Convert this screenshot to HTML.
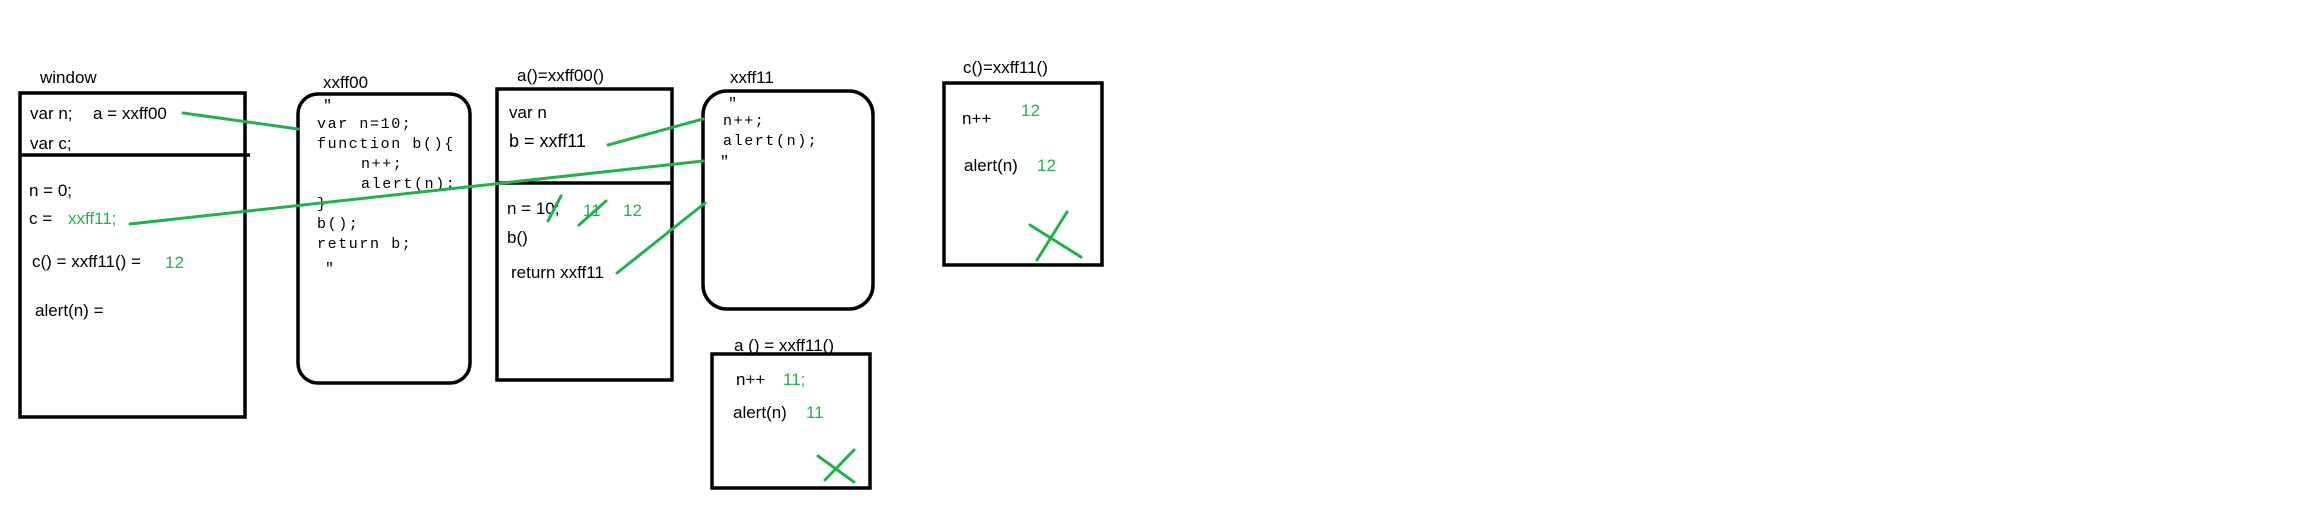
<!DOCTYPE html>
<html><head><meta charset="utf-8"><style>
html,body{margin:0;padding:0;background:#fff;}
svg{display:block;}
text{font-family:"Liberation Sans","Noto Sans CJK SC",sans-serif;font-size:17px;fill:#000;}
.m{font-family:"Liberation Mono",monospace;font-size:15px;letter-spacing:1.6px;}
.g{fill:#22b14c;}
</style></head><body>
<svg width="2318" height="528" viewBox="0 0 2318 528" xmlns="http://www.w3.org/2000/svg">
<g fill="none" stroke="#000" stroke-width="3.5">
<rect x="20" y="93" width="225" height="324"/>
<line x1="20" y1="155" x2="250" y2="155"/>
<rect x="298" y="94" width="172" height="289" rx="20"/>
<rect x="497" y="89" width="175" height="291"/>
<line x1="497" y1="183" x2="673" y2="183"/>
<rect x="703" y="91" width="170" height="218" rx="24"/>
<rect x="712" y="354" width="158" height="134"/>
<rect x="944" y="83" width="158" height="182"/>
</g>
<text x="40" y="83">window</text>
<text x="30" y="119">var n;</text>
<text x="93" y="119">a = xxff00</text>
<text x="30" y="149">var c;</text>
<text x="29" y="196">n = 0;</text>
<text x="29" y="224">c =</text>
<text x="68" y="224" class="g">xxff11;</text>
<text x="32" y="267">c() = xxff11() =</text>
<text x="165" y="268" class="g">12</text>
<text x="35" y="316">alert(n) =</text>

<text x="323" y="88">xxff00</text>
<text x="323" y="110" class="m">"</text>
<text x="317" y="128" class="m">var n=10;</text>
<text x="317" y="148" class="m">function b(){</text>
<text x="361" y="168" class="m">n++;</text>
<text x="361" y="188" class="m">alert(n);</text>
<text x="317" y="208" class="m">}</text>
<text x="317" y="228" class="m">b();</text>
<text x="317" y="248" class="m">return b;</text>
<text x="325" y="273" class="m">"</text>

<text x="517" y="81">a()=xxff00()</text>
<text x="509" y="118">var n</text>
<text x="509" y="147" style="font-size:18px">b = xxff11</text>
<text x="507" y="214">n = 10;</text>
<text x="583" y="216" class="g">11</text>
<text x="623" y="216" class="g">12</text>
<text x="507" y="243">b()</text>
<text x="511" y="278">return xxff11</text>

<text x="730" y="83">xxff11</text>
<text x="728" y="108" class="m">"</text>
<text x="723" y="125" class="m">n++;</text>
<text x="723" y="145" class="m">alert(n);</text>
<text x="720" y="166" class="m">"</text>

<text x="734" y="351">a () = xxff11()</text>
<text x="736" y="385">n++</text>
<text x="783" y="385" class="g">11;</text>
<text x="733" y="418">alert(n)</text>
<text x="806" y="418" class="g">11</text>

<text x="963" y="73">c()=xxff11()</text>
<text x="962" y="124">n++</text>
<text x="1021" y="116" class="g">12</text>
<text x="964" y="171">alert(n)</text>
<text x="1037" y="171" class="g">12</text>

<g stroke="#22b14c" stroke-width="3" fill="none" stroke-linecap="round">
<line x1="183" y1="113" x2="298" y2="129"/>
<line x1="130" y1="224" x2="703" y2="161"/>
<line x1="608" y1="145" x2="703" y2="119"/>
<line x1="617" y1="273" x2="705" y2="203"/>
<line x1="548" y1="221" x2="561" y2="196"/>
<line x1="579" y1="225" x2="606" y2="201"/>
<line x1="818" y1="456" x2="854" y2="482"/>
<line x1="825" y1="480" x2="854" y2="450"/>
<line x1="1030" y1="225" x2="1081" y2="257"/>
<line x1="1037" y1="260" x2="1067" y2="212"/>
</g>
</svg>
</body></html>
